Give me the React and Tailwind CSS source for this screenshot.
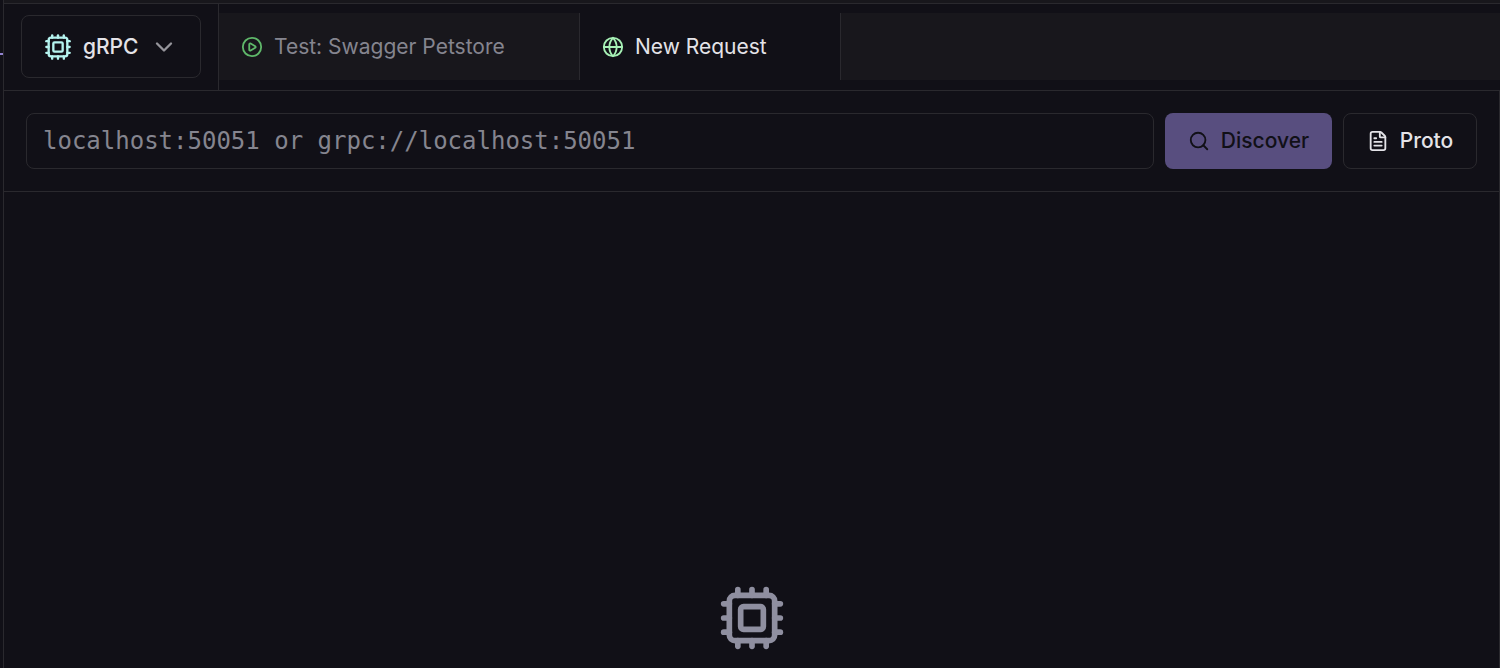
import React, { useState } from "react";
import { ChevronDown, CirclePlay, Cpu, FileText, Globe, Search } from "lucide-react";

const tabs = [
  { id: "petstore", title: "Test: Swagger Petstore", icon: CirclePlay, iconClass: "text-[#5fb86a]", width: "w-[361px]" },
  { id: "new", title: "New Request", icon: Globe, iconClass: "text-[#a6f0b5]", width: "w-[261px]" },
];

// Protocol picker on the left of the tab strip
function ProtocolButton() {
  return (
    <div className="flex shrink-0 items-start border-r border-[#2a292e] px-[17px] pt-[11px]">
      <button
        type="button"
        aria-haspopup="menu"
        className="flex h-[63px] w-[180px] items-center rounded-lg border border-[#2a292e] pl-[22px] text-[21px] font-medium text-[#e4e3e8]"
      >
        <Cpu size={28} className="shrink-0 text-[#b5f3ef]" />
        <span className="ml-[11px]">gRPC</span>
        <ChevronDown size={28} className="ml-[11px] shrink-0 text-[#96959b]" />
      </button>
    </div>
  );
}

function Tab({ tab, active, onSelect }) {
  const Icon = tab.icon;
  return (
    <button
      type="button"
      role="tab"
      aria-selected={active}
      onClick={onSelect}
      className={`flex shrink-0 items-center gap-[11px] border-r border-[#2a292e] pl-[22px] text-[21px] ${tab.width} ${
        active ? "bg-[#111017] text-[#e4e3e8]" : "bg-[#18171c] text-[#85858f]"
      }`}
    >
      <Icon size={22} className={`shrink-0 ${tab.iconClass}`} />
      <span className="truncate">{tab.title}</span>
    </button>
  );
}

export default function App() {
  const [activeTab, setActiveTab] = useState("new");
  const [address, setAddress] = useState("");

  return (
    <div className="flex min-h-screen bg-[#111017] font-['Inter',sans-serif]">
      {/* Edge of the sidebar */}
      <div className="w-1 shrink-0 border-r border-[#2a292e] pt-[53px]">
        <div className="h-[2px] bg-[#9283d0]" />
      </div>

      <div className="flex min-w-0 flex-1 flex-col">
        <div className="h-1 shrink-0 border-b border-[#2a292e] bg-[#18171c]" />

        <header className="flex h-[87px] shrink-0 border-b border-[#2a292e]">
          <ProtocolButton />
          <div className="flex min-w-0 flex-1 pt-[9px] pb-[10px]">
            <div role="tablist" className="flex min-w-0 flex-1 bg-[#18171c]">
              {tabs.map((tab) => (
                <Tab
                  key={tab.id}
                  tab={tab}
                  active={tab.id === activeTab}
                  onSelect={() => setActiveTab(tab.id)}
                />
              ))}
            </div>
          </div>
        </header>

        <div className="flex flex-1 flex-col border-r border-[#2a292e]">
          {/* Server address and actions */}
          <form
            className="flex shrink-0 gap-[11px] border-b border-[#2a292e] px-[22px] py-[22px]"
            onSubmit={(e) => e.preventDefault()}
          >
            <input
              type="text"
              aria-label="Server address"
              value={address}
              onChange={(e) => setAddress(e.target.value)}
              placeholder="localhost:50051 or grpc://localhost:50051"
              className="h-14 min-w-0 flex-1 rounded-lg border border-[#2a292e] bg-transparent px-4 font-['DejaVu_Sans_Mono',monospace] text-[24px] text-[#e4e3e8] placeholder:text-[#85858f]"
            />
            <button
              type="submit"
              className="flex h-14 w-[167px] shrink-0 items-center justify-center gap-[11px] rounded-lg bg-[#584e7f] text-[21px] font-medium text-[#111017]"
            >
              <Search size={22} />
              Discover
            </button>
            <button
              type="button"
              className="flex h-14 w-[134px] shrink-0 items-center justify-center gap-[11px] rounded-lg border border-[#2a292e] text-[21px] font-medium text-[#e4e3e8]"
            >
              <FileText size={22} />
              Proto
            </button>
          </form>

          {/* Empty state */}
          <main className="flex flex-1 flex-col items-center justify-end pb-4">
            <Cpu size={68} className="text-[#8f8fa0]" />
          </main>
        </div>
      </div>
    </div>
  );
}
